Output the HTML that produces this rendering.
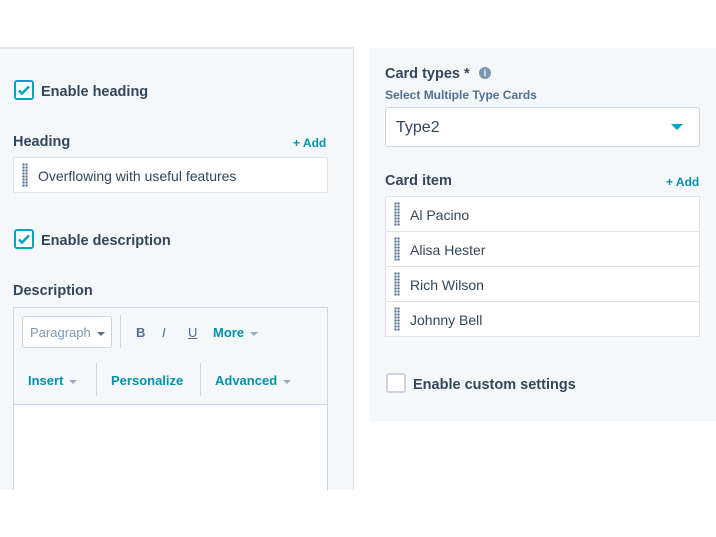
<!DOCTYPE html>
<html><head><meta charset="utf-8"><style>
*{box-sizing:border-box;margin:0;padding:0}
body{width:716px;height:537px;background:#fff;font-family:"Liberation Sans",sans-serif;color:#33475b;position:relative;overflow:hidden}
.a{position:absolute}
.lp{left:0;top:47px;width:354px;height:443px;background:#f5f8fa;border-top:2px solid #dfe3eb;border-right:1px solid #dfe3eb}
.rp{left:369px;top:48px;width:347px;height:373px;background:#f5f8fa}
.cb{width:20px;height:20px;border:2px solid #00a4bd;border-radius:3px;background:#fff}
.cb svg{position:absolute;left:1px;top:1px}
.lbl{font-size:14.5px;font-weight:bold;color:#33475b}
.add{font-size:12px;font-weight:bold;color:#0091ae}
.inp{background:#fff;border:1px solid #dfe3eb;border-radius:2px}
.grip{width:6px;background-image:radial-gradient(circle,#516f90 1.1px,transparent 1.3px);background-size:3px 3px;}
.txt{font-size:14px;color:#33475b}
.tb{font-size:13px;font-weight:bold;color:#0091ae}
.car{display:inline-block;width:0;height:0;border-left:4px solid transparent;border-right:4px solid transparent;border-top:4px solid #99acc2;vertical-align:middle;margin-left:6px}
.row{left:385px;width:315px;height:36px;background:#fff;border:1px solid #dfe3eb}
</style></head><body>
<div class="a lp"></div>
<div class="a rp"></div>

<div class="a cb" style="left:14px;top:80px"><svg width="14" height="14" viewBox="0 0 14 14"><path d="M2 7.5l3 3 7-7" stroke="#00a4bd" stroke-width="2.6" fill="none"/></svg></div>
<div class="a lbl" style="left:41px;top:84px">Enable heading</div>
<div class="a lbl" style="left:13px;top:134px">Heading</div>
<div class="a add" style="left:293px;top:136px">+ Add</div>
<div class="a inp" style="left:13px;top:157px;width:315px;height:36px"></div>
<div class="a grip" style="left:22px;top:163px;height:24px"></div>
<div class="a txt" style="left:38px;top:168px">Overflowing with useful features</div>

<div class="a cb" style="left:14px;top:229px"><svg width="14" height="14" viewBox="0 0 14 14"><path d="M2 7.5l3 3 7-7" stroke="#00a4bd" stroke-width="2.6" fill="none"/></svg></div>
<div class="a lbl" style="left:41px;top:233px">Enable description</div>
<div class="a lbl" style="left:13px;top:283px">Description</div>

<div class="a" style="left:13px;top:307px;width:315px;height:183px;border:1px solid #cbd6e2;border-bottom:none;background:#f5f8fa"></div>
<div class="a" style="left:14px;top:404px;width:313px;height:86px;background:#fff;border-top:1px solid #cbd6e2"></div>
<div class="a" style="left:22px;top:316px;width:90px;height:32px;background:#fff;border:1px solid #cbd6e2;border-radius:3px;font-size:13px;color:#7c98b6;padding:8px 0 0 7px">Paragraph<span class="car" style="border-top-color:#516f90"></span></div>
<div class="a" style="left:120px;top:315px;width:1px;height:33px;background:#cbd6e2"></div>
<div class="a" style="left:136px;top:325px;font-size:13px;font-weight:bold;color:#516f90">B</div>
<div class="a" style="left:162px;top:325px;font-size:13px;font-style:italic;color:#516f90">I</div>
<div class="a" style="left:188px;top:325px;font-size:13px;text-decoration:underline;color:#516f90">U</div>
<div class="a tb" style="left:213px;top:325px">More<span class="car"></span></div>
<div class="a tb" style="left:28px;top:373px">Insert<span class="car"></span></div>
<div class="a" style="left:96px;top:363px;width:1px;height:33px;background:#cbd6e2"></div>
<div class="a tb" style="left:111px;top:373px">Personalize</div>
<div class="a" style="left:200px;top:363px;width:1px;height:33px;background:#cbd6e2"></div>
<div class="a tb" style="left:215px;top:373px">Advanced<span class="car"></span></div>

<div class="a lbl" style="left:385px;top:66px">Card types *</div>
<div class="a" style="left:479px;top:67px;width:12px;height:12px;border-radius:50%;background:#7c98b6;color:#fff;font-size:9px;font-weight:bold;text-align:center;line-height:12px">i</div>
<div class="a" style="left:385px;top:88px;font-size:12px;font-weight:bold;color:#516f90">Select Multiple Type Cards</div>
<div class="a inp" style="left:385px;top:107px;width:315px;height:40px;border-color:#cbd6e2;border-radius:3px"></div>
<div class="a" style="left:396px;top:119px;font-size:16px;color:#33475b">Type2</div>
<div class="a" style="left:671px;top:124px;width:0;height:0;border-left:6px solid transparent;border-right:6px solid transparent;border-top:6px solid #00a4bd"></div>

<div class="a lbl" style="left:385px;top:173px">Card item</div>
<div class="a add" style="left:666px;top:175px">+ Add</div>
<div class="a row" style="top:196px"></div>
<div class="a row" style="top:231px"></div>
<div class="a row" style="top:266px"></div>
<div class="a row" style="top:301px"></div>
<div class="a grip" style="left:394px;top:202px;height:24px"></div>
<div class="a grip" style="left:394px;top:237px;height:24px"></div>
<div class="a grip" style="left:394px;top:272px;height:24px"></div>
<div class="a grip" style="left:394px;top:307px;height:24px"></div>
<div class="a txt" style="left:410px;top:207px">Al Pacino</div>
<div class="a txt" style="left:410px;top:242px">Alisa Hester</div>
<div class="a txt" style="left:410px;top:277px">Rich Wilson</div>
<div class="a txt" style="left:410px;top:312px">Johnny Bell</div>

<div class="a" style="left:386px;top:373px;width:20px;height:20px;border:2px solid #cbd6e2;border-radius:3px;background:#fff"></div>
<div class="a lbl" style="left:413px;top:377px">Enable custom settings</div>
</body></html>
